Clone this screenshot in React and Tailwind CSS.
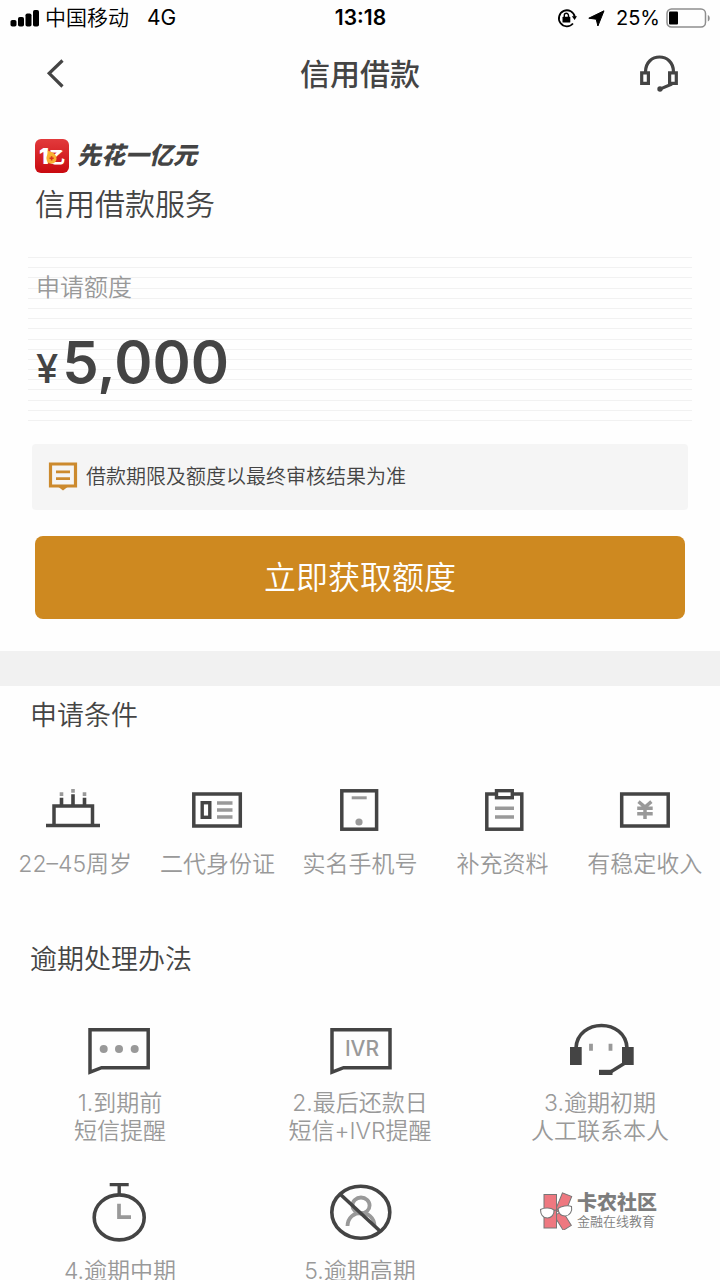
const conditions = [
  { label: "22–45周岁", icon: <CakeIcon /> },
  { label: "二代身份证", icon: <IdCardIcon /> },
  { label: "实名手机号", icon: <PhoneIcon /> },
  { label: "补充资料", icon: <ClipboardIcon /> },
  { label: "有稳定收入", icon: <MoneyIcon /> },
];

const overdueSteps = [
  { lines: ["1.到期前", "短信提醒"], icon: <SmsIcon /> },
  { lines: ["2.最后还款日", "短信+IVR提醒"], icon: <IvrIcon /> },
  { lines: ["3.逾期初期", "人工联系本人"], icon: <AgentIcon /> },
  { lines: ["4.逾期中期"], icon: <StopwatchIcon /> },
  { lines: ["5.逾期高期"], icon: <BlockedIcon /> },
];

// Condition icons share one 60x44 box
function CakeIcon() {
  return (
    <svg viewBox="0 0 60 44" className="w-[60px] h-11" fill="none">
      <path d="M1 37.5H55M9 37V18H47.5V37" stroke="#444" strokeWidth="3.5" />
      <path d="M16.5 9.7V17M28 6.3V17M39.5 9.7V17" stroke="#444" strokeWidth="3.6" />
      <path d="M16.5 4.3V8M28 1V4.7M39.5 4.3V8" stroke="#999" strokeWidth="3.6" />
    </svg>
  );
}

function IdCardIcon() {
  return (
    <svg viewBox="0 0 60 44" className="w-[60px] h-11" fill="none">
      <rect x="5.8" y="6" width="46.5" height="32" stroke="#444" strokeWidth="3.5" />
      <rect x="14.2" y="14.7" width="7.6" height="14.6" stroke="#444" strokeWidth="3.4" />
      <path d="M29 15H44.5M29 22H44.5M29 29H44.5" stroke="#999" strokeWidth="3.3" />
    </svg>
  );
}

function PhoneIcon() {
  return (
    <svg viewBox="0 0 60 44" className="w-[60px] h-11" fill="none">
      <rect x="11.8" y="2.8" width="34.8" height="38.4" stroke="#444" strokeWidth="3.5" />
      <path d="M21.7 9.8H36.7" stroke="#999" strokeWidth="3" />
      <circle cx="29" cy="34" r="3.6" fill="#999" />
    </svg>
  );
}

function ClipboardIcon() {
  return (
    <svg viewBox="0 0 60 44" className="w-[60px] h-11" fill="none">
      <rect x="14.8" y="6" width="35" height="35.2" stroke="#444" strokeWidth="3.5" />
      <rect x="24.5" y="2.7" width="15.8" height="7" fill="#fff" stroke="#444" strokeWidth="3.4" />
      <path d="M23 20.2H42M23 29H42" stroke="#999" strokeWidth="3.4" />
    </svg>
  );
}

function MoneyIcon() {
  return (
    <svg viewBox="0 0 60 44" className="w-[60px] h-11" fill="none">
      <rect x="6.7" y="6" width="46.5" height="32" stroke="#444" strokeWidth="3.5" />
      <path
        d="M23.5 13.7L30 19L36.4 13.7M30 18V31M22.2 20.3H37.7M22.2 25.7H37.7"
        stroke="#999"
        strokeWidth="3.5"
      />
    </svg>
  );
}

// Overdue icons share one 60px tall box
function SmsIcon() {
  return (
    <svg viewBox="0 0 64 60" className="w-16 h-[60px]" fill="none">
      <path d="M2 14.8H60.2V52.7H13.6L2 57.2Z" stroke="#444" strokeWidth="3.5" />
      <g fill="#999">
        <circle cx="15.7" cy="34" r="4" />
        <circle cx="31" cy="34" r="4" />
        <circle cx="46.7" cy="34" r="4" />
      </g>
    </svg>
  );
}

function IvrIcon() {
  return (
    <svg viewBox="0 0 64 60" className="w-16 h-[60px]" fill="none">
      <path d="M4 14.8H62V52.7H15.6L4 57.2Z" stroke="#444" strokeWidth="3.5" />
      <text x="34" y="41" textAnchor="middle" fill="#999" className="font-['Inter',sans-serif] text-[21px] font-medium">
        IVR
      </text>
    </svg>
  );
}

function AgentIcon() {
  return (
    <svg viewBox="0 0 68 60" className="w-[68px] h-[60px]" fill="none">
      <path d="M10 33C11.5 3 59.5 3 61 33" stroke="#444" strokeWidth="3.6" />
      <path d="M4 32H15.7V50H4ZM56 32H67.7V50H56Z" fill="#444" />
      <path d="M33 54.8H46.500V60H33Z" fill="#444" />
      <path d="M44.500 57L59 48" stroke="#444" strokeWidth="3.5" />
      <path d="M25 28.7V35.7M44.500 28.7V35.7" stroke="#999" strokeWidth="3.8" />
    </svg>
  );
}

function StopwatchIcon() {
  return (
    <svg viewBox="0 0 64 60" className="w-16 h-[60px]" fill="none">
      <ellipse cx="31.2" cy="34.4" rx="25" ry="22.5" stroke="#444" strokeWidth="3.6" />
      <path d="M21.7 1.6H40.7M31.2 1.6V12" stroke="#444" strokeWidth="3.4" />
      <path d="M31 20.7V34.2H43" stroke="#999" strokeWidth="3.7" />
    </svg>
  );
}

function BlockedIcon() {
  return (
    <svg viewBox="0 0 64 60" className="w-16 h-[60px]" fill="none">
      <ellipse cx="33" cy="22.5" rx="8.6" ry="8" stroke="#999" strokeWidth="3.8" />
      <path d="M19.5 43C20 25.5 46 25.5 46.5 43" stroke="#999" strokeWidth="3.8" />
      <ellipse cx="32.8" cy="29.3" rx="29" ry="26" stroke="#444" strokeWidth="3.6" />
      <path d="M12 11L53 49" stroke="#444" strokeWidth="3.6" />
    </svg>
  );
}

function StatusBar() {
  return (
    <div className="grid grid-cols-[1fr_auto_1fr] items-center h-9 pl-[10px] pr-[9px] text-black text-[21px] leading-9">
      <div className="flex items-center gap-[6px]">
        <svg viewBox="0 0 29 18" className="w-[29px] h-[18px]">
          <rect x="0.5" y="11" width="6" height="6.5" rx="1.8" />
          <rect x="8" y="8" width="6" height="9.5" rx="1.8" />
          <rect x="15.5" y="4.5" width="6" height="13" rx="1.8" />
          <rect x="23" y="1" width="6" height="16.5" rx="1.8" />
        </svg>
        <span className="font-[350]">中国移动</span>
        <span className="ml-3">4G</span>
      </div>

      <span className="font-semibold">13:18</span>

      <div className="flex items-center justify-end">
        {/* Rotation lock */}
        <svg viewBox="0 0 20 20" className="w-5 h-5 mr-[11px]" fill="none">
          <path d="M16 15.5A8 8 0 1 1 17.8 9" stroke="#000" strokeWidth="1.8" />
          <path d="M14.8 8.3H20L17.6 12Z" fill="#000" />
          <rect x="5.5" y="8.8" width="7.8" height="5.8" rx="0.6" fill="#000" />
          <path d="M7.3 9V7.4A2.1 2.1 0 0 1 11.5 7.4V9" stroke="#000" strokeWidth="1.4" />
        </svg>
        <svg viewBox="0 0 17 17" className="w-[17px] h-[17px] mr-[11px]">
          <path d="M16 0.8L9.9 16L8.2 9.2L0.8 8.2Z" stroke="#000" strokeLinejoin="round" />
        </svg>
        <span className="text-[20px]">25%</span>
        <svg viewBox="0 0 45 20" className="w-[45px] h-5 ml-[6px]" fill="none">
          <rect x="1" y="1" width="38.5" height="18" rx="4.5" stroke="#8e8e8e" strokeWidth="1.5" />
          <rect x="3" y="3.5" width="9" height="13" rx="1" fill="#000" />
          <path d="M41.8 7V13.5C44.4 12.5 44.4 8 41.8 7Z" fill="#8e8e8e" />
        </svg>
      </div>
    </div>
  );
}

function Header() {
  return (
    <header className="flex items-center justify-between h-19 px-10">
      <button aria-label="返回" className="w-10 h-10">
        <svg viewBox="0 0 40 40" className="w-10 h-10" fill="none">
          <path d="M22.5 6.5L9.2 19.3L22.5 32.5" stroke="#444" strokeWidth="3.2" />
        </svg>
      </button>
      <h1 className="text-[30px] font-medium leading-10">信用借款</h1>
      <button aria-label="客服" className="w-10 h-10">
        <svg viewBox="0 0 40 40" className="w-10 h-10" fill="none">
          <path d="M5.5 18C5.5 -2 33.5 -2 33.5 18" stroke="#444" strokeWidth="3.2" />
          <path d="M1.7 18.8H8.4V29.4H1.7ZM29.6 18.8H36.3V29.4H29.6Z" stroke="#444" strokeWidth="3.2" />
          <path d="M32 30L20.5 34.8" stroke="#444" strokeWidth="3" />
          <circle cx="20" cy="35" r="2.7" fill="#444" />
        </svg>
      </button>
    </header>
  );
}

function BrandLogo() {
  return (
    <svg viewBox="0 0 34 34" className="w-[34px] h-[34px]">
      <defs>
        <linearGradient id="brandRed" x1="0" y1="0" x2="0" y2="1">
          <stop offset="0" stopColor="#e23a3c" />
          <stop offset="1" stopColor="#c9090f" />
        </linearGradient>
      </defs>
      <rect width="34" height="34" rx="6" fill="url(#brandRed)" />
      <g fill="#fff" textAnchor="middle" className="font-black">
        <text x="9" y="25" className="text-[22px]">1</text>
        <text x="22" y="24" className="text-[16px]">乙</text>
      </g>
      <path d="M12.5 11.5C16 13 21.5 14 21.5 19.5A5 5 0 0 1 11.5 20C11 17 13.5 15 12.5 11.5Z" fill="#f9b233" />
      <path d="M14.5 19.3H18.7M16.6 17.2V21.4" stroke="#d8361f" strokeWidth="1.6" />
    </svg>
  );
}

function Watermark() {
  return (
    <div className="absolute right-[63px] bottom-[50px] flex items-center gap-1 text-[#7d7d7d]">
      <svg viewBox="0 0 34 38" className="w-[34px] h-[38px]">
        <g fill="#ee7880" stroke="#777" strokeWidth="1">
          <rect x="19.5" y="2" width="10" height="19" transform="rotate(22 24.5 11.5)" />
          <rect x="19" y="20" width="9.5" height="17" transform="rotate(-32 24 28.5)" />
          <rect x="5" y="2.5" width="12.5" height="33.5" />
        </g>
        <g fill="#fff" stroke="#777" strokeWidth="1.1">
          <path d="M1.5 17.5C5 15.5 12 15.5 15 18C15.5 22.5 12.5 26 8.5 26C4 26 1.5 22.5 1.5 17.5Z" />
          <path d="M19 16.5C22 14 29 13 32.5 14.5C33.5 19 31 23.5 26.5 24C22 24.2 19.5 21 19 16.5Z" />
          <path d="M15 18.5L19 17.5" />
        </g>
      </svg>
      <div>
        <p className="text-[20px] leading-5 font-black">卡农社区</p>
        <p className="text-[13px] leading-4 font-[350]">金融在线教育</p>
      </div>
    </div>
  );
}

function App() {
  return (
    <div className="relative h-screen overflow-hidden bg-[#fefefe] text-[#444] font-['Inter','Noto_Sans_CJK_SC',sans-serif]">
      <div className="h-full overflow-y-auto [scrollbar-width:none]">
        <StatusBar />
        <Header />

        {/* Product */}
        <section className="px-[35px] pt-[26px]">
          <div className="flex items-center gap-2">
            <BrandLogo />
            <span className="text-[24px] leading-9 font-black italic">先花一亿元</span>
          </div>
          <h2 className="mt-[10px] text-[30px] leading-10 font-[350]">信用借款服务</h2>
        </section>

        {/* Amount */}
        <section className="relative mx-7 mt-[33px] px-2 pt-[15px] pb-[30px]">
          <div className="absolute inset-0 flex flex-col justify-between">
            {Array.from({ length: 17 }, (_, i) => (
              <div key={i} className="h-px bg-[#f1f1f1]" />
            ))}
          </div>
          <div className="relative">
            <p className="text-[24px] leading-8 font-[350] text-[#999]">申请额度</p>
            <p className="flex items-baseline gap-1 mt-[29px] font-semibold">
              <span className="text-[40px] leading-10 font-medium">¥</span>
              <span className="text-[58px] leading-[58px]">5,000</span>
            </p>
          </div>
        </section>

        {/* Notice */}
        <div className="flex items-center gap-2 mx-8 mt-[23px] px-4 h-[66px] rounded bg-[#f5f5f5]">
          <svg viewBox="0 0 30 30" className="w-[30px] h-[30px]" fill="none">
            <path d="M2.5 2H27.5V24H2.5Z" stroke="#cc8a2e" strokeWidth="3.2" />
            <path d="M8 9.8H22M8 16.6H22" stroke="#cc8a2e" strokeWidth="2.8" />
            <path d="M10.5 25H19.5L15 28.5Z" fill="#cc8a2e" />
          </svg>
          <p className="text-[20px] leading-7 font-[350]">借款期限及额度以最终审核结果为准</p>
        </div>

        <div className="px-[35px] pt-[26px] pb-8">
          <button className="w-full h-[83px] rounded-lg bg-[#ce8920] text-white text-[32px] font-[350]">
            立即获取额度
          </button>
        </div>

        <div className="h-[35px] bg-[#f1f1f1]" />

        {/* Conditions */}
        <section className="pt-[10px]">
          <h3 className="px-[30px] text-[27px] leading-10 font-[350]">申请条件</h3>
          <ul className="grid grid-cols-5 px-1 mt-[52px]">
            {conditions.map((item) => (
              <li key={item.label} className="flex flex-col items-center">
                {item.icon}
                <span className="mt-[18px] text-[23px] leading-7 font-[350] text-[#999] whitespace-nowrap">
                  {item.label}
                </span>
              </li>
            ))}
          </ul>
        </section>

        {/* Overdue handling */}
        <section className="pt-[62px] pb-10">
          <h3 className="px-[30px] text-[27px] leading-10 font-[350]">逾期处理办法</h3>
          <ul className="grid grid-cols-3 gap-y-[38px] mt-[35px]">
            {overdueSteps.map((step) => (
              <li key={step.lines[0]} className="flex flex-col items-center">
                {step.icon}
                <div className="mt-[14px] text-[23px] leading-7 font-[350] text-center text-[#999]">
                  {step.lines.map((line) => (
                    <p key={line}>{line}</p>
                  ))}
                </div>
              </li>
            ))}
          </ul>
        </section>
      </div>

      <Watermark />
    </div>
  );
}

export default App;
